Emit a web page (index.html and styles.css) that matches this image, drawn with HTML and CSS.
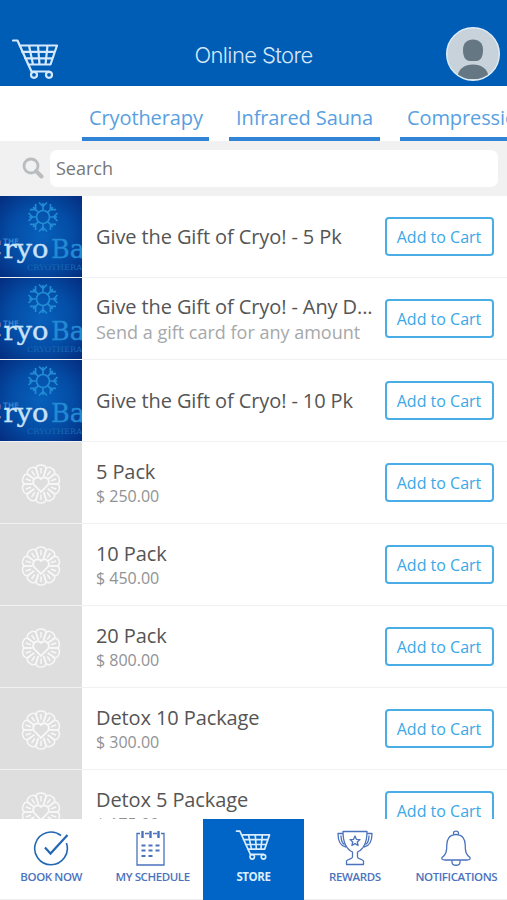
FILE: index.html
```html
<!DOCTYPE html>
<html lang="en">
<head>
<meta charset="utf-8">
<title>Online Store</title>
<link rel="stylesheet" href="styles.css">
</head>
<body>
<svg class="defs" aria-hidden="true">
  <defs>
    <radialGradient id="glow" cx="50%" cy="50%" r="68%">
      <stop offset="0" stop-color="#0760bb"/>
      <stop offset="0.55" stop-color="#044da6"/>
      <stop offset="1" stop-color="#042f82"/>
    </radialGradient>
    <g id="arm"><path d="M0 -6.500V-14M-4 -14.500L0 -10.500L4 -14.500"/></g>
    <symbol id="cryo" viewBox="0 0 82 81">
      <rect width="82" height="81" fill="url(#glow)"/>
      <g transform="translate(43 21)" fill="none" stroke="#218bd4" stroke-width="1.7">
        <circle r="6.500"/>
        <use href="#arm"/><use href="#arm" transform="rotate(45)"/><use href="#arm" transform="rotate(90)"/><use href="#arm" transform="rotate(135)"/>
        <use href="#arm" transform="rotate(180)"/><use href="#arm" transform="rotate(225)"/><use href="#arm" transform="rotate(270)"/><use href="#arm" transform="rotate(315)"/>
      </g>
      <text class="logo-the" x="3" y="48" textLength="16" lengthAdjust="spacingAndGlyphs">THE</text>
      <text class="logo-name" x="-19" y="62" textLength="21" lengthAdjust="spacingAndGlyphs">C</text>
      <text class="logo-name" x="3.500" y="62" textLength="45" lengthAdjust="spacingAndGlyphs">ryo</text>
      <text class="logo-bar" x="51" y="62" textLength="46" lengthAdjust="spacingAndGlyphs">Bar</text>
      <text class="logo-sub" x="27" y="74" textLength="66" lengthAdjust="spacingAndGlyphs">CRYOTHERAPY</text>
    </symbol>
    <g id="petal"><path d="M-2.6 -8L-5 -15.5Q-4.7 -19 0 -19Q4.7 -19 5 -15.5L2.6 -8M0 -10.500V-16"/></g>
    <symbol id="flower" viewBox="0 0 42 42">
      <g transform="translate(21 21)" fill="none" stroke="#f8f8f8" stroke-width="1.5">
        <use href="#petal"/><use href="#petal" transform="rotate(36)"/><use href="#petal" transform="rotate(72)"/><use href="#petal" transform="rotate(108)"/><use href="#petal" transform="rotate(144)"/>
        <use href="#petal" transform="rotate(180)"/><use href="#petal" transform="rotate(216)"/><use href="#petal" transform="rotate(252)"/><use href="#petal" transform="rotate(288)"/><use href="#petal" transform="rotate(324)"/>
        <path d="M0 8L-7 0.8C-10 -4.500 -3.500 -9.500 0 -5C3.500 -9.500 10 -4.500 7 0.8Z" fill="#dedede" stroke-width="1.8"/>
      </g>
    </symbol>
    <symbol id="cart" viewBox="0 0 48 40">
      <g fill="none" stroke="currentColor" stroke-width="2.2" stroke-linejoin="round" stroke-linecap="round">
        <path d="M2 1.5H6.500L20.5 32.5M8.500 6.5H46L39.5 25.5H17M11 12.8H44M14 19.3H41.5M18 6.5L22 25.5M27 6.5L28.500 25.5M36.5 6.5L34.500 25.5M20.5 32.5H38"/>
        <circle cx="23" cy="35.800" r="3"/><circle cx="38" cy="35.800" r="3"/>
      </g>
    </symbol>
  </defs>
</svg>

<div class="app">
  <header class="header">
    <svg class="header-cart" viewBox="0 0 48 40"><use href="#cart"/></svg>
    <h1 class="title">Online Store</h1>
    <svg class="avatar" viewBox="0 0 54 54">
      <defs><clipPath id="face"><circle cx="27" cy="27" r="25.5"/></clipPath></defs>
      <circle cx="27" cy="27" r="26.3" fill="#c8d2da" stroke="#e0edf7" stroke-width="1.4"/>
      <g clip-path="url(#face)" fill="#657783">
        <path d="M17 23C17 16 21 12.5 27 12.5S37 16 37 23C37 30 34.500 34 30 34H24C19.500 34 17 30 17 23Z"/>
        <path d="M11 52C12 41 19 37.500 27 37.500S42 41 43 52Z"/>
      </g>
    </svg>
  </header>

  <nav class="tabs">
    <a class="tab tab-cryo">Cryotherapy</a>
    <a class="tab tab-sauna">Infrared Sauna</a>
    <a class="tab tab-comp">Compression</a>
  </nav>

  <div class="search">
    <svg class="search-icon" viewBox="0 0 22 22"><circle cx="9" cy="9" r="7" fill="none" stroke="#b9bdc0" stroke-width="2.800"/><path d="M14 14L19.500 19.500" stroke="#b9bdc0" stroke-width="4" stroke-linecap="round"/></svg>
    <div class="search-field">Search</div>
  </div>

  <main class="list">
    <article class="item"><div class="thumb"><svg class="photo"><use href="#cryo"/></svg></div><div class="info"><div class="name">Give the Gift of Cryo! - 5 Pk</div></div><button class="add">Add to Cart</button></article>
    <article class="item"><div class="thumb"><svg class="photo"><use href="#cryo"/></svg></div><div class="info"><div class="name">Give the Gift of Cryo! - Any D...</div><div class="note">Send a gift card for any amount</div></div><button class="add">Add to Cart</button></article>
    <article class="item"><div class="thumb"><svg class="photo"><use href="#cryo"/></svg></div><div class="info"><div class="name">Give the Gift of Cryo! - 10 Pk</div></div><button class="add">Add to Cart</button></article>
    <article class="item"><div class="thumb"><svg class="flower"><use href="#flower"/></svg></div><div class="info"><div class="name">5 Pack</div><div class="price">$ 250.00</div></div><button class="add">Add to Cart</button></article>
    <article class="item"><div class="thumb"><svg class="flower"><use href="#flower"/></svg></div><div class="info"><div class="name">10 Pack</div><div class="price">$ 450.00</div></div><button class="add">Add to Cart</button></article>
    <article class="item"><div class="thumb"><svg class="flower"><use href="#flower"/></svg></div><div class="info"><div class="name">20 Pack</div><div class="price">$ 800.00</div></div><button class="add">Add to Cart</button></article>
    <article class="item"><div class="thumb"><svg class="flower"><use href="#flower"/></svg></div><div class="info"><div class="name">Detox 10 Package</div><div class="price">$ 300.00</div></div><button class="add">Add to Cart</button></article>
    <article class="item"><div class="thumb"><svg class="flower"><use href="#flower"/></svg></div><div class="info"><div class="name">Detox 5 Package</div><div class="price">$ 175.00</div></div><button class="add">Add to Cart</button></article>
  </main>

  <nav class="bottom">
    <a class="nav book">
      <svg class="nav-icon" viewBox="0 0 36 36"><g fill="none" stroke="currentColor"><path d="M28 5.500A16.300 16.300 0 1 0 33.400 13" stroke-width="1.600"/><path d="M12 17.500L17.500 23.500L34.500 5" stroke-width="2.200"/></g></svg>
      <span>BOOK NOW</span>
    </a>
    <a class="nav schedule">
      <svg class="nav-icon" viewBox="0 0 36 36"><g fill="none" stroke="currentColor"><path d="M7 3.500H4V35H31V3.500H28M12 3.500H16M20 3.500H24" stroke-width="1.300"/><path d="M9.500 1V8M17.500 1V8M25.500 1V8" stroke-width="2.400"/><path d="M8.500 15.500H12.500M15.500 15.500H19.500M22.500 15.500H26.500M8.500 20.500H12.500M15.500 20.500H19.500M22.500 20.500H26.500M8.500 26H12.500M15.500 26H19.500" stroke-width="2"/></g></svg>
      <span>MY SCHEDULE</span>
    </a>
    <a class="nav store">
      <svg class="nav-icon" viewBox="0 0 48 40"><use href="#cart"/></svg>
      <span>STORE</span>
    </a>
    <a class="nav rewards">
      <svg class="nav-icon" viewBox="0 0 36 36"><g fill="none" stroke="currentColor" stroke-width="1.300" stroke-linejoin="round"><path d="M6 1.500H30C30 12 27 19 20.500 22V27C20.500 29 26 29 26.500 31V34.500H9.500V31C10 29 15.500 29 15.500 27V22C9 19 6 12 6 1.500Z"/><path d="M6 3.500H1C1 11 3 16 9 17M30 3.500H35C35 11 33 16 27 17M4 5.500C4 10 5 13 7.500 14.500M32 5.500C32 10 31 13 28.500 14.500"/><path d="M18 6L19.400 9.300L23 9.600L20.300 12L21.100 15.500L18 13.600L14.900 15.500L15.700 12L13 9.600L16.600 9.300Z"/></g></svg>
      <span>REWARDS</span>
    </a>
    <a class="nav notifications">
      <svg class="nav-icon" viewBox="0 0 36 36"><g fill="none" stroke="currentColor" stroke-width="1.300" stroke-linejoin="round"><path d="M15.500 5V3C15.500 0.500 20.500 0.500 20.500 3V5M18 4.500C11 4.500 8.800 10 8.800 15C8.800 22 8 24.500 4 27.500Q3 30 7 30H29Q33 30 32 27.500C28 24.500 27.200 22 27.200 15C27.200 10 25 4.500 18 4.500ZM14 30V32C14 36.300 22 36.300 22 32V30"/></g></svg>
      <span>NOTIFICATIONS</span>
    </a>
  </nav>
</div>
</body>
</html>
```

FILE: styles.css
```css
* { box-sizing: border-box; }
body { margin: 0; background: #fff; font-family: "Open Sans", sans-serif; }
.defs { position: absolute; width: 0; height: 0; }
.app { width: 507px; height: 900px; overflow: hidden; display: flex; flex-direction: column; }

.header { height: 86px; flex: none; background: #005db6; display: grid; grid-template-columns: 60px 1fr 60px; align-items: start; padding-top: 26px; }
.header-cart { width: 48px; height: 40px; margin: 13px 0 0 11px; color: #d5e9fc; }
.title { margin: 15px 0 0; text-align: center; color: #d6e7f7; font: 300 22px/28px Inter, "Liberation Sans", sans-serif; letter-spacing: -0.6px; white-space: nowrap; }
.avatar { width: 54px; height: 54px; margin: 1px 0 0 -1px; }

.tabs { height: 55px; flex: none; display: flex; gap: 20px; padding-left: 82px; overflow: hidden; background: #fff; }
.tab { flex: none; border-bottom: 4px solid #3184d5; padding: 18px 0 0 7px; font-size: 20px; line-height: 28px; letter-spacing: -0.1px; color: #599fe1; white-space: nowrap; }
.tab-cryo { width: 127px; }
.tab-sauna { width: 151px; }
.tab-comp { width: 135px; }

.search { height: 55px; flex: none; background: #f1f1f1; display: flex; align-items: flex-start; padding: 9px 9px 0 22px; }
.search-icon { width: 22px; height: 22px; margin: 7px 6px 0 0; flex: none; }
.search-field { flex: 1; height: 37px; border-radius: 7px; background: #fff; padding-left: 6px; font-size: 18px; line-height: 36px; color: #777; }

.list { flex: 1; min-height: 0; overflow: hidden; }
.item { height: 82px; display: flex; align-items: center; border-bottom: 1px solid #f0f1f2; padding-right: 13px; }
.thumb { width: 82px; height: 81px; flex: none; background: #dedede; display: flex; align-items: center; justify-content: center; }
.photo { width: 82px; height: 81px; }
.flower { width: 42px; height: 42px; margin-top: 2px; }
.info { flex: 1; min-width: 0; padding-left: 14px; white-space: nowrap; }
.name { font-size: 20px; line-height: 26px; letter-spacing: -0.1px; color: #555; }
.note { font-size: 18px; line-height: 24px; color: #a6a8aa; }
.price { font-size: 16px; line-height: 22px; color: #909294; }
.add { flex: none; width: 109px; height: 39px; padding: 0 1px 0 0; border: 2px solid #4bade5; border-radius: 4px; background: #fff; color: #3aa8e6; font: 16px/34px "Open Sans", sans-serif; }

.logo-the { font: bold 7.5px "DejaVu Sans", sans-serif; fill: #3381ce; }
.logo-name { font: 26px "DejaVu Serif", serif; fill: #c9e2f8; stroke: #c9e2f8; stroke-width: 0.4px; }
.logo-bar { font: 26px "DejaVu Serif", serif; fill: #2389d3; stroke: #2389d3; stroke-width: 0.4px; }
.logo-sub { font: 7.5px "DejaVu Serif", serif; fill: #1769b6; }

.bottom { height: 81px; flex: none; display: grid; grid-template-columns: repeat(5, 1fr); background: #fff; border-bottom: 1px solid #eceef0; }
.nav { display: flex; flex-direction: column; align-items: center; padding-top: 11px; color: #4b72bd; font-size: 11.5px; font-weight: 600; line-height: 16px; letter-spacing: -0.4px; white-space: nowrap; }
.nav-icon { width: 36px; height: 36px; margin-bottom: 3px; }
.book .nav-icon { color: #2468b5; }
.book, .schedule { padding-left: 1px; }
.schedule .nav-icon { margin-right: 4px; }
.store { background: #0065c6; color: #d9edff; font-weight: 700; margin-bottom: -1px; }
.store .nav-icon { height: 30px; margin-bottom: 9px; }
```
